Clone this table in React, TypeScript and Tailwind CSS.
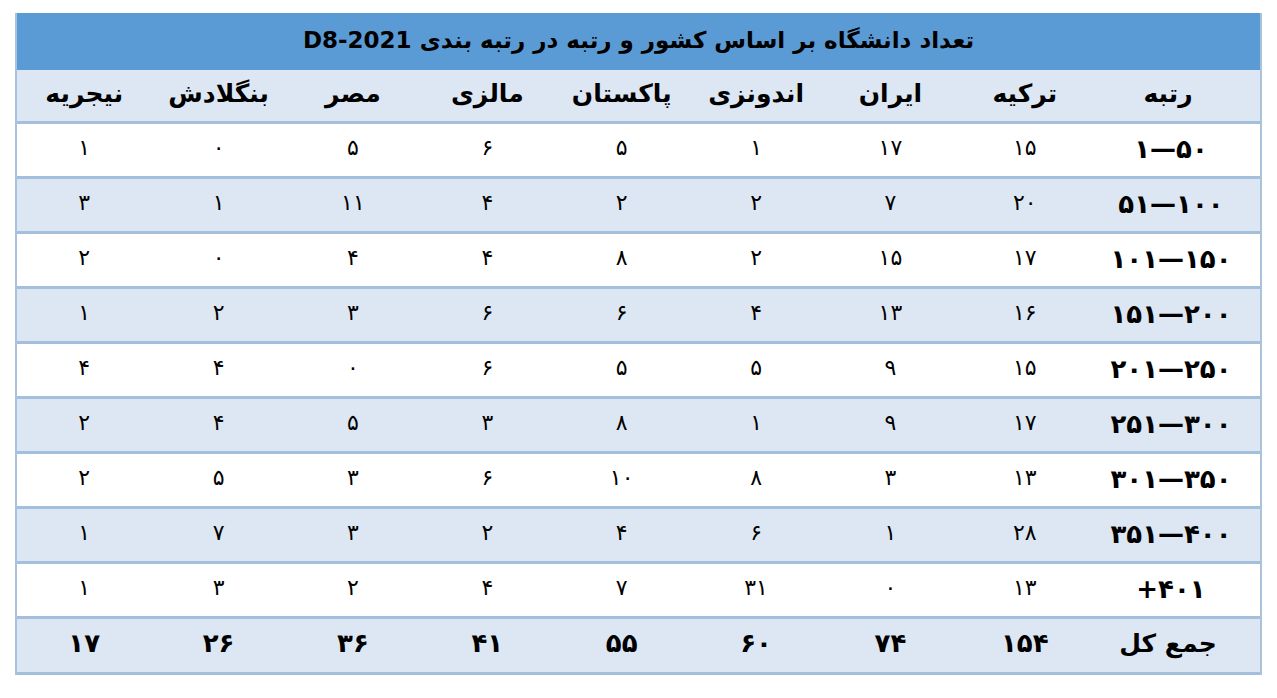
import React from 'react';

const fa = (n: number | string) =>
  String(n).replace(/[0-9]/g, d => '۰۱۲۳۴۵۶۷۸۹'[Number(d)]);

const countries = ['ترکیه', 'ایران', 'اندونزی', 'پاکستان', 'مالزی', 'مصر', 'بنگلادش', 'نیجریه'];

const rows: { rank: string; values: number[] }[] = [
  { rank: '۱—۵۰', values: [15, 17, 1, 5, 6, 5, 0, 1] },
  { rank: '۵۱—۱۰۰', values: [20, 7, 2, 2, 4, 11, 1, 3] },
  { rank: '۱۰۱—۱۵۰', values: [17, 15, 2, 8, 4, 4, 0, 2] },
  { rank: '۱۵۱—۲۰۰', values: [16, 13, 4, 6, 6, 3, 2, 1] },
  { rank: '۲۰۱—۲۵۰', values: [15, 9, 5, 5, 6, 0, 4, 4] },
  { rank: '۲۵۱—۳۰۰', values: [17, 9, 1, 8, 3, 5, 4, 2] },
  { rank: '۳۰۱—۳۵۰', values: [13, 3, 8, 10, 6, 3, 5, 2] },
  { rank: '۳۵۱—۴۰۰', values: [28, 1, 6, 4, 2, 3, 7, 1] },
  { rank: '+۴۰۱', values: [13, 0, 31, 7, 4, 2, 3, 1] },
];

const totals = [154, 74, 60, 55, 41, 36, 26, 17];

const grid = 'grid grid-cols-[168px_repeat(8,1fr)] items-center';

export default function App() {
  return (
    <div className="w-[1277px] h-[698px] bg-white pt-[13px] pl-[15px] font-['DejaVu_Sans',sans-serif] text-black">
      <div dir="rtl" className="w-[1247px] border-x-2 border-[#a9c3dd]">
        {/* عنوان */}
        <div className="h-[57px] bg-[#5b9bd5] flex items-center justify-center text-[23px] font-bold pb-[2px]">
          تعداد دانشگاه بر اساس کشور و رتبه در رتبه بندی D8-2021
        </div>

        {/* سرستون */}
        <div className={`${grid} h-[54px] bg-[#dde7f3] border-b-[3px] border-[#a3bfdb]`}>
          <div className="text-center text-[25px] font-bold pb-[4px] pr-[16px]">رتبه</div>
          {countries.map(c => (
            <div key={c} className="text-center text-[25px] font-bold pb-[4px]">{c}</div>
          ))}
        </div>

        {rows.map((r, i) => (
          <div
            key={r.rank}
            className={`${grid} h-[55px] border-b-[3px] border-[#a3bfdb] ${i % 2 === 0 ? 'bg-white' : 'bg-[#dde7f3]'}`}
          >
            <div dir="ltr" className="text-center text-[26px] font-bold pb-[2px] pr-[10px]">{r.rank}</div>
            {r.values.map((v, j) => (
              <div key={j} className="text-center text-[22px] pb-[6px]">{fa(v)}</div>
            ))}
          </div>
        ))}

        {/* جمع کل */}
        <div className={`${grid} h-[56px] bg-[#dde7f3] border-b-[3px] border-[#a3bfdb]`}>
          <div className="text-center text-[25px] font-bold pb-[4px] pr-[16px]">جمع کل</div>
          {totals.map((t, j) => (
            <div key={j} className="text-center text-[26px] font-bold pb-[4px]">{fa(t)}</div>
          ))}
        </div>
      </div>
    </div>
  );
}
